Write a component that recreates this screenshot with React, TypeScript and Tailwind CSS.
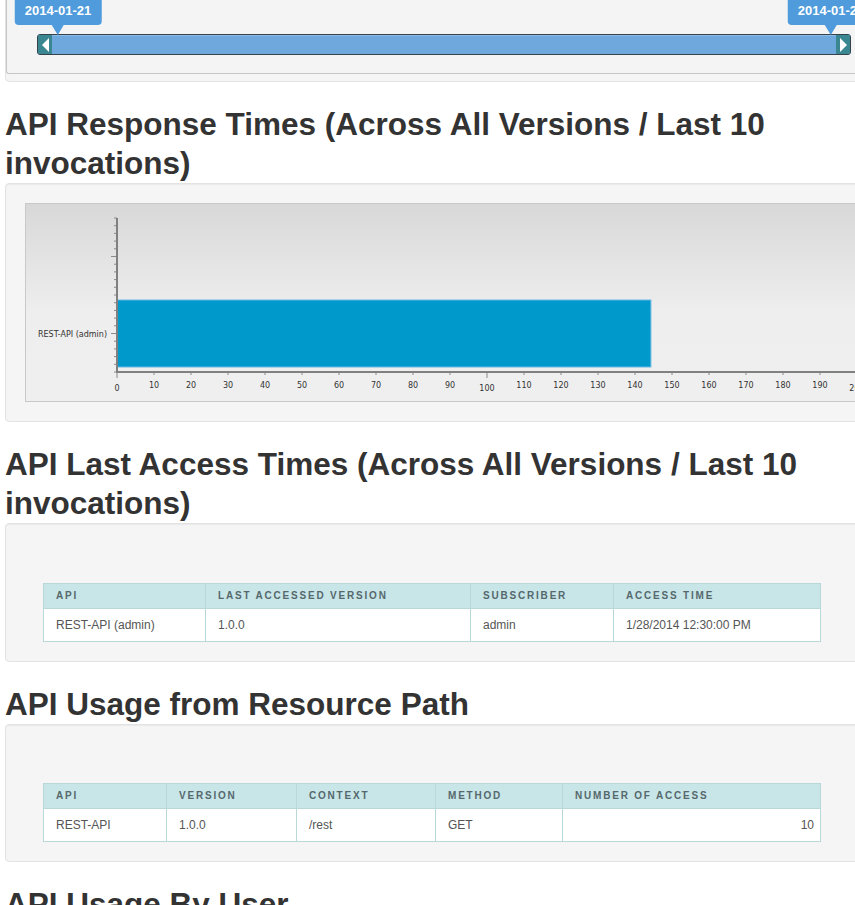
import type { ReactNode } from "react";

type Col = { label: string; w: string; right?: boolean };

const accessCols: Col[] = [
  { label: "API", w: "w-[162px]" },
  { label: "Last Accessed Version", w: "w-[265px]" },
  { label: "Subscriber", w: "w-[143px]" },
  { label: "Access Time", w: "w-[207px]" },
];

const resourceCols: Col[] = [
  { label: "API", w: "w-[123px]" },
  { label: "Version", w: "w-[130px]" },
  { label: "Context", w: "w-[139px]" },
  { label: "Method", w: "w-[127px]" },
  { label: "Number of Access", w: "w-[258px]", right: true },
];

function Heading({ children }: { children: ReactNode }) {
  return <h2 className="mt-[23px] text-[31.5px] font-bold leading-[39px] text-[#333]">{children}</h2>;
}

function Well({ children }: { children: ReactNode }) {
  return (
    <div className="rounded-[4px] border border-[#e3e3e3] bg-[#f5f5f5] p-[19px] shadow-[inset_0_1px_1px_rgba(0,0,0,0.05)]">
      {children}
    </div>
  );
}

function DateLabel({ text, left }: { text: string; left: string }) {
  return (
    <div className={`absolute bottom-full flex -translate-x-1/2 flex-col items-center whitespace-nowrap ${left}`}>
      <div className="rounded-[4px] bg-[#4f9bdb] px-[10px] pb-[6px] pt-[6px] text-[13px] font-bold leading-[16px] text-white">
        {text}
      </div>
      <div className="h-0 w-0 border-x-[6px] border-t-[10px] border-x-transparent border-t-[#4f9bdb]" />
    </div>
  );
}

function TopWell() {
  return (
    <div className="-mt-[20px] rounded-b-[4px] border border-[#e3e3e3] bg-[#f5f5f5] pb-[7px]">
      <div className="rounded-b-[3px] border-b border-l border-[#c6c6c6] bg-[#f4f4f4] pb-[18px] pt-[53px]">
        <div className="relative ml-[30px] flex h-[21px] w-[814px] rounded-[3px] border border-[#34434a] bg-[#6fa8dc]">
          <DateLabel text="2014-01-21" left="left-[20px]" />
          <DateLabel text="2014-01-28" left="left-[793px]" />
          <div className="flex w-[14px] items-center justify-center rounded-l-[2px] bg-[#3a8791]">
            <svg width="7" height="14" viewBox="0 0 7 14">
              <path d="M7 0 L0 7 L7 14 Z" fill="#fff" />
            </svg>
          </div>
          <div className="flex-1 border-t border-[#8dbbe6]" />
          <div className="flex w-[14px] items-center justify-center rounded-r-[2px] bg-[#3a8791]">
            <svg width="7" height="14" viewBox="0 0 7 14">
              <path d="M0 0 L7 7 L0 14 Z" fill="#fff" />
            </svg>
          </div>
        </div>
      </div>
    </div>
  );
}

function Chart() {
  const x0 = 91;
  const unit = 3.7;
  const axisY = 168;
  const topY = 14;
  const xs = Array.from({ length: 21 }, (_, i) => i * 10);
  const ys = Array.from({ length: 21 }, (_, i) => topY + i * 7.7);
  return (
    <div className="h-[199px] border-y border-l border-[#c9c9c9] bg-[linear-gradient(to_bottom,#d8d8d8,#eeeeee_55%,#efefef)]">
      <svg width="880" height="197" className="block font-['DejaVu_Sans',Verdana,sans-serif]">
        <rect x={x0} y={96} width={144.3 * unit} height={67} fill="#0099cc" stroke="#6cb8e4" strokeWidth="1" />
        {ys.map((y, i) => {
          const major = i === 5 || i === 15;
          return (
            <line key={i} x1={major ? x0 - 6 : x0 - 3} x2={x0} y1={y} y2={y} stroke="#8a8a8a" strokeWidth="1" />
          );
        })}
        {xs.map((v) => {
          const x = x0 + v * unit;
          const major = v % 100 === 0;
          return (
            <g key={v}>
              <line x1={x} x2={x} y1={axisY} y2={axisY + (major ? 6 : 3)} stroke="#8a8a8a" strokeWidth="1" />
              <text x={x} y={major ? 187 : 184} fontSize="8" textAnchor="middle" fill="#333">
                {v}
              </text>
            </g>
          );
        })}
        <line x1={x0} x2={x0} y1={topY} y2={axisY} stroke="#808080" strokeWidth="2" />
        <line x1={x0 - 1} x2={880} y1={axisY} y2={axisY} stroke="#808080" strokeWidth="2" />
        <text x={x0 - 10} y={133} fontSize="8" textAnchor="end" fill="#333">
          REST-API (admin)
        </text>
      </svg>
    </div>
  );
}

function DataTable({ cols, row }: { cols: Col[]; row: string[] }) {
  return (
    <table className="ml-[18px] w-[777px] table-fixed border-collapse">
      <thead>
        <tr>
          {cols.map((c) => (
            <th
              key={c.label}
              className={`${c.w} h-[25px] border border-[#b9d8d8] bg-[#c8e6e8] px-3 text-left text-[10px] font-bold uppercase leading-[12px] tracking-[1.8px] text-[#56686d]`}
            >
              {c.label}
            </th>
          ))}
        </tr>
      </thead>
      <tbody>
        <tr>
          {row.map((v, i) => (
            <td
              key={i}
              className={`h-[33px] border border-[#b9d8d8] bg-white px-3 text-[12px] leading-[16px] text-[#555] ${
                cols[i].right ? "pr-[6px] text-right" : "text-left"
              }`}
            >
              {v}
            </td>
          ))}
        </tr>
      </tbody>
    </table>
  );
}

export default function App() {
  return (
    <div className="w-full overflow-hidden bg-white font-['Liberation_Sans',Helvetica,Arial,sans-serif] text-[#333]">
      <div className="ml-[5px] w-[940px] pb-10">
        <TopWell />
        <Heading>API Response Times (Across All Versions / Last 10 invocations)</Heading>
        <Well>
          <Chart />
        </Well>
        <Heading>API Last Access Times (Across All Versions / Last 10 invocations)</Heading>
        <Well>
          <div className="h-[40px]" />
          <DataTable cols={accessCols} row={["REST-API (admin)", "1.0.0", "admin", "1/28/2014 12:30:00 PM"]} />
        </Well>
        <Heading>API Usage from Resource Path</Heading>
        <Well>
          <div className="h-[39px]" />
          <DataTable cols={resourceCols} row={["REST-API", "1.0.0", "/rest", "GET", "10"]} />
        </Well>
        <Heading>API Usage By User</Heading>
        <Well>
          <div className="h-[120px]" />
        </Well>
      </div>
    </div>
  );
}
